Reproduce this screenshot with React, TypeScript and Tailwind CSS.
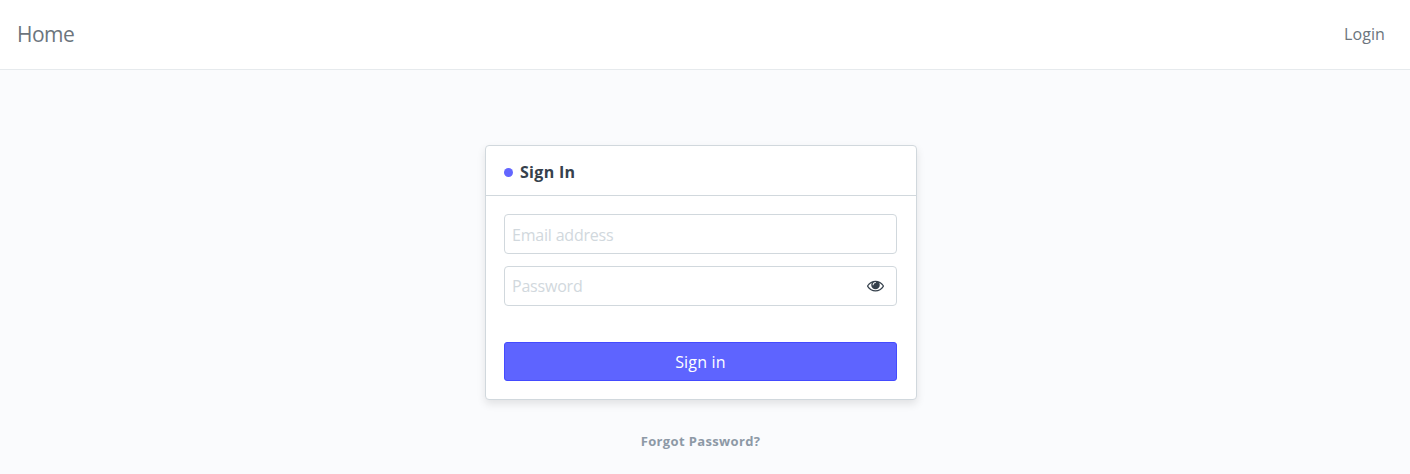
import { useState } from 'react';

function EyeIcon() {
  return (
    <svg viewBox="0 0 1792 1792" className="h-[17px] w-[17px] fill-current">
      <path d="M1664 960q-152-236-381-353 61 104 61 225 0 185-131.5 316.5t-316.5 131.5-316.5-131.5-131.5-316.5q0-121 61-225-229 117-381 353 133 205 333.5 326.5t434.5 121.5 434.5-121.5 333.5-326.5zm-720-384q0-20-14-34t-34-14q-125 0-214.5 89.5t-89.5 214.5q0 20 14 34t34 14 34-14 14-34q0-86 61-147t147-61q20 0 34-14t14-34zm848 384q0 34-20 69-140 230-376.5 368.5t-499.5 138.5-499.5-139-376.5-368q-20-35-20-69t20-69q140-229 376.5-368t499.5-139 499.5 139 376.5 368q20 35 20 69z" />
    </svg>
  );
}

const fieldClass =
  'block h-10 w-full rounded border border-[#d1d8dd] bg-white px-[7px] text-base tracking-[-0.2px] text-[#36414c] outline-none placeholder:text-[#d1d8dd]';

export default function App() {
  const [showPassword, setShowPassword] = useState(false);

  return (
    <div className="h-screen overflow-hidden bg-[#fafbfd] font-['Open_Sans',sans-serif] text-[#36414c]">
      {/* Top bar */}
      <header className="flex h-[70px] items-center justify-between border-b border-[#e6eaed] bg-white pr-[25px] pb-px pl-[17px] text-[#6c757d]">
        <a href="#" className="pt-px text-[21px] tracking-[-0.5px]">Home</a>
        <a href="#" className="text-base tracking-[0.1px]">Login</a>
      </header>

      <main className="ml-[485px] w-[432px] pt-[75px]">
        <div className="h-[255px] rounded border border-[#d1d8dd] bg-white shadow-[0_4px_8px_rgba(0,0,0,0.1)]">
          <div className="flex h-[50px] items-center gap-[7px] border-b border-[#d1d8dd] px-[18px] pt-[3px]">
            <span className="h-[9px] w-[9px] rounded-full bg-[#6366ff]" />
            <h1 className="text-base font-bold tracking-[0.3px]">Sign In</h1>
          </div>

          <form className="pt-[18px] pr-[19px] pl-[18px]" onSubmit={(e) => e.preventDefault()}>
            <input type="email" placeholder="Email address" className={`${fieldClass} pt-[2px]`} />
            <div className="relative mt-3">
              <input
                type={showPassword ? 'text' : 'password'}
                placeholder="Password"
                className={fieldClass}
              />
              <button
                type="button"
                aria-label="Toggle password visibility"
                onClick={() => setShowPassword(!showPassword)}
                className="absolute top-[11px] right-[13px]"
              >
                <EyeIcon />
              </button>
            </div>
            <button
              type="submit"
              className="mt-9 h-[39px] w-full rounded-[3px] border border-[#444bff] bg-[#5e64ff] text-base tracking-[0.2px] text-white"
            >
              Sign in
            </button>
          </form>
        </div>

        <div className="mt-8 pr-px text-center text-[13px] leading-[18px] font-bold tracking-[0.35px] text-[#8d99a6]">
          <a href="#">Forgot Password?</a>
        </div>
      </main>
    </div>
  );
}
